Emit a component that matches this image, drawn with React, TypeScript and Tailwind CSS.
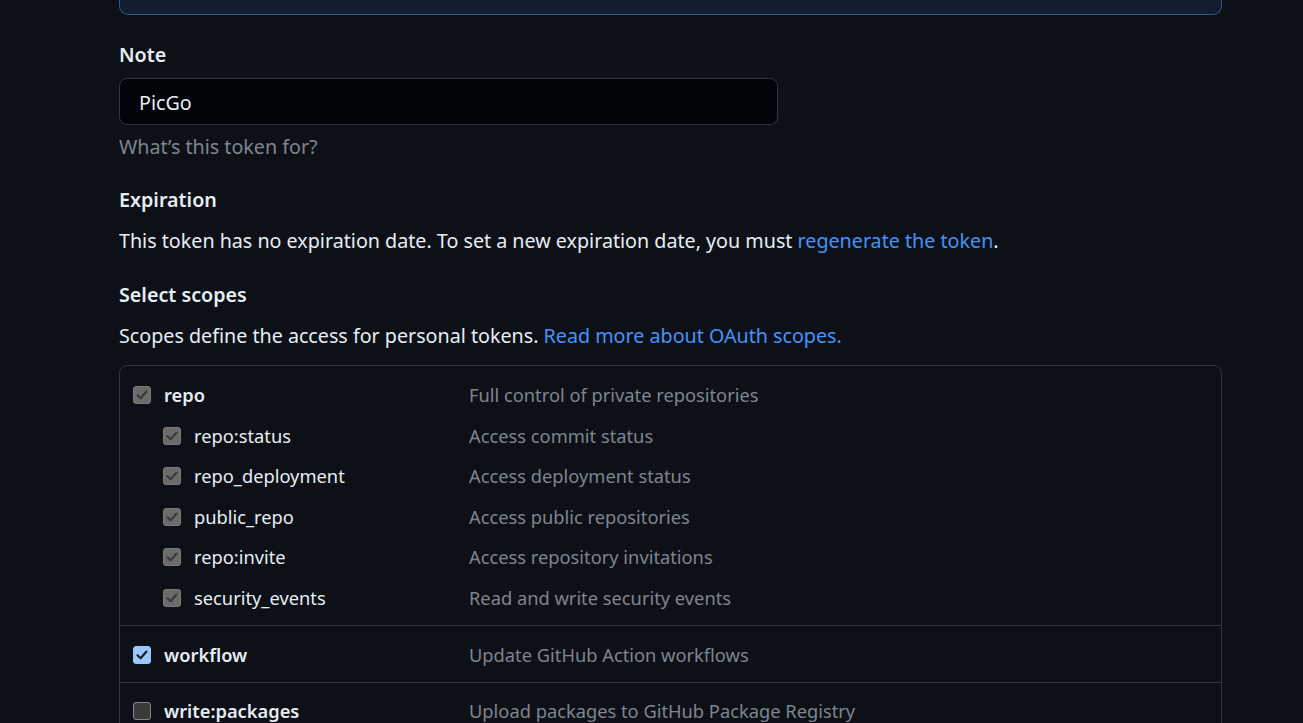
import React from "react";

type Scope = {
  name: string;
  desc: string;
  state: "disabled" | "checked" | "empty";
  children?: { name: string; desc: string }[];
};

const scopes: Scope[] = [
  {
    name: "repo",
    desc: "Full control of private repositories",
    state: "disabled",
    children: [
      { name: "repo:status", desc: "Access commit status" },
      { name: "repo_deployment", desc: "Access deployment status" },
      { name: "public_repo", desc: "Access public repositories" },
      { name: "repo:invite", desc: "Access repository invitations" },
      { name: "security_events", desc: "Read and write security events" },
    ],
  },
  { name: "workflow", desc: "Update GitHub Action workflows", state: "checked" },
  { name: "write:packages", desc: "Upload packages to GitHub Package Registry", state: "empty" },
];

function Box({ state }: { state: Scope["state"] }) {
  // 見た目だけのチェックボックス
  const cls =
    state === "checked"
      ? "bg-[#99c8ff] border-[#99c8ff]"
      : state === "disabled"
      ? "bg-[#6b6b6b] border-[#7a7a7a]"
      : "bg-[#3b3b3b] border-[#858585]";
  return (
    <span className={`w-[18px] h-[18px] shrink-0 rounded-[3px] border flex items-center justify-center ${cls}`}>
      {state !== "empty" && (
        <svg width="14" height="14" viewBox="0 0 14 14" fill="none">
          <path
            d="M2.5 7.3 L5.6 10.3 L11.5 3.6"
            stroke={state === "checked" ? "#1e1e1e" : "#3a3a3a"}
            strokeWidth="2.2"
            strokeLinecap="round"
            strokeLinejoin="round"
          />
        </svg>
      )}
    </span>
  );
}

function Row({ name, desc, state, sub }: { name: string; desc: string; state: Scope["state"]; sub?: boolean }) {
  return (
    <div className="flex items-center h-[30px]">
      <div className={`flex items-center w-[349px] shrink-0 ${sub ? "pl-[43px]" : "pl-[13px]"}`}>
        <Box state={state} />
        <span className={`ml-[13px] ${sub ? "" : "font-semibold"} text-[#e6edf3]`}>{name}</span>
      </div>
      <span className="text-[#7d8590]">{desc}</span>
    </div>
  );
}

const groupPad = ["pt-[14px]", "pt-[14px]", "pt-[13px]"];

export default function App() {
  return (
    <div
      className="min-h-screen bg-[#0d1117] text-[#e6edf3] text-[19.7px] leading-[30px]"
      style={{ fontFamily: '"Noto Sans", "Open Sans", sans-serif' }}
    >
      <div className="ml-[119px] w-[1103px]">
        <div className="h-[15px] bg-[#121d2f] border border-t-0 border-[#2c5a94] rounded-b-[9px]" />

        <div className="mt-[25px] font-semibold">Note</div>
        <div className="mt-[8px] w-[659px] h-[47px] bg-[#010409] border border-[#30363d] rounded-[8px] flex items-center px-[19px] pt-[2px]">
          PicGo
        </div>
        <div className="mt-[7px] text-[#7d8590]">What’s this token for?</div>

        <div className="mt-[23px] font-semibold">Expiration</div>
        <div className="mt-[11px]">
          This token has no expiration date. To set a new expiration date, you must{" "}
          <span className="text-[#4493f8]">regenerate the token</span>.
        </div>

        <div className="mt-[24px] font-semibold">Select scopes</div>
        <div className="mt-[11px]">
          Scopes define the access for personal tokens.{" "}
          <span className="text-[#4493f8]">Read more about OAuth scopes.</span>
        </div>

        <div className="mt-[14px] border border-[#30363d] rounded-[8px] divide-y divide-[#30363d] text-[18.3px]">
          {scopes.map((s, i) => (
            <div key={s.name} className={`${groupPad[i]} pb-[12px] flex flex-col gap-[10.5px]`}>
              <Row name={s.name} desc={s.desc} state={s.state} />
              {s.children?.map((c) => (
                <Row key={c.name} name={c.name} desc={c.desc} state="disabled" sub />
              ))}
            </div>
          ))}
        </div>
      </div>
    </div>
  );
}
